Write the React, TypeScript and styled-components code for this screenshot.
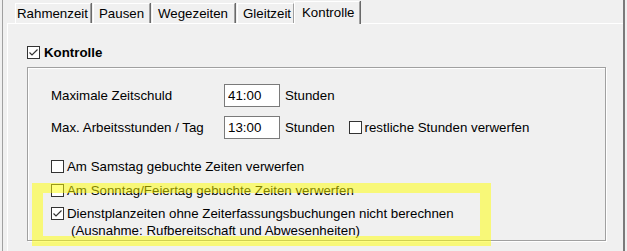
import React from 'react';
import styled, { createGlobalStyle, css } from 'styled-components';

const GlobalStyle = createGlobalStyle`
  html, body {
    margin: 0;
    padding: 0;
    background: #f0f0f0;
  }
  body {
    font-family: "Liberation Sans", Arial, sans-serif;
    font-size: 13.3px;
    color: #000;
  }
`;

const tabs = [
  { label: 'Rahmenzeit', w: 76 },
  { label: 'Pausen', w: 57 },
  { label: 'Wegezeiten', w: 83 },
  { label: 'Gleitzeit', w: 57 },
  { label: 'Kontrolle', w: 66, active: true },
];

export default function App() {
  return (
    <>
      <GlobalStyle />
      <Frame>
        <Window>
          <TabStrip>
            {tabs.map((t) => (
              <Tab key={t.label} $w={t.w} $active={!!t.active}>
                {t.label}
              </Tab>
            ))}
          </TabStrip>
          <Panel>
            <CheckRow $gap={4}>
              <CheckBox checked />
              <Bold>Kontrolle</Bold>
            </CheckRow>
            <Group>
              <FieldRow>
                <Label>Maximale Zeitschuld</Label>
                <TimeInput readOnly defaultValue="41:00" />
                <Unit>Stunden</Unit>
              </FieldRow>
              <FieldRow $top={9}>
                <Label>Max. Arbeitsstunden / Tag</Label>
                <TimeInput readOnly defaultValue="13:00" />
                <Unit>Stunden</Unit>
                <InlineCheck>
                  <CheckBox />
                  <span>restliche Stunden verwerfen</span>
                </InlineCheck>
              </FieldRow>
              <CheckList>
                <CheckRow $gap={3} $h={24}>
                  <CheckBox />
                  <span>Am Samstag gebuchte Zeiten verwerfen</span>
                </CheckRow>
                <CheckRow $gap={3} $h={24}>
                  <CheckBox />
                  <span>Am Sonntag/Feiertag gebuchte Zeiten verwerfen</span>
                </CheckRow>
                <MultiRow>
                  <BoxSlot>
                    <CheckBox checked />
                  </BoxSlot>
                  <div>
                    <div>Dienstplanzeiten ohne Zeiterfassungsbuchungen nicht berechnen</div>
                    <Indent>(Ausnahme: Rufbereitschaft und Abwesenheiten)</Indent>
                  </div>
                </MultiRow>
              </CheckList>
            </Group>
          </Panel>
        </Window>
        <Highlight />
      </Frame>
    </>
  );
}

function CheckBox({ checked }: { checked?: boolean }) {
  return (
    <Box>
      {checked && (
        <svg width="11" height="11" viewBox="0 0 11 11">
          <polyline
            points="1.5,5.5 4,8 9.5,2.5"
            fill="none"
            stroke="#333"
            strokeWidth="1.2"
          />
        </svg>
      )}
    </Box>
  );
}

const Frame = styled.div`
  position: relative;
  width: 627px;
  height: 251px;
  overflow: hidden;
  padding-left: 2px;
  box-sizing: border-box;
`;

const Window = styled.div`
  display: flex;
  flex-direction: column;
  width: 623px;
  height: 100%;
  box-sizing: border-box;
  border-left: 1px solid #a0a0a0;
  border-right: 2px solid #7a7a7a;
`;

const TabStrip = styled.div`
  display: flex;
  align-items: flex-end;
  height: 23px;
  padding-left: 12px;
  position: relative;
  z-index: 1;
`;

const Tab = styled.div<{ $w: number; $active: boolean }>`
  box-sizing: border-box;
  width: ${(p) => p.$w}px;
  height: 20px;
  line-height: 19px;
  padding-left: 5px;
  margin-right: 2px;
  white-space: nowrap;
  background: #f0f0f0;
  border-top: 1px solid #fff;
  border-left: 1px solid #fff;
  border-right: 1px solid #a0a0a0;
  box-shadow: 1px 0 0 #696969;

  &:first-child {
    padding-left: 1px;
  }

  ${(p) =>
    p.$active &&
    css`
      height: 23px;
      line-height: 21px;
      margin-left: -2px;
      margin-bottom: -1px;
      padding-left: 7px;
      position: relative;
      z-index: 2;
    `}
`;

const Panel = styled.div`
  flex: 1;
  margin-left: 4px;
  border-left: 1px solid #fff;
  border-top: 1px solid #fff;
  padding: 22px 0 0 19px;
`;

const CheckRow = styled.div<{ $gap: number; $h?: number }>`
  display: flex;
  align-items: center;
  gap: ${(p) => p.$gap}px;
  height: ${(p) => p.$h ?? 13}px;
  white-space: nowrap;
`;

const Box = styled.span`
  flex: none;
  display: inline-flex;
  align-items: center;
  justify-content: center;
  width: 13px;
  height: 13px;
  box-sizing: border-box;
  border: 1px solid #333;
  background: #fff;
`;

const Bold = styled.span`
  font-weight: 700;
`;

const Group = styled.div`
  width: 579px;
  height: 174px;
  margin-top: 8px;
  box-sizing: border-box;
  border: 1px solid #a0a0a0;
  box-shadow: 1px 1px 0 #fff, inset 1px 1px 0 #fff;
  padding: 16px 0 0 23px;
`;

const FieldRow = styled.div<{ $top?: number }>`
  display: flex;
  align-items: center;
  height: 23px;
  margin-top: ${(p) => p.$top ?? 0}px;
  white-space: nowrap;
`;

const Label = styled.span`
  width: 173px;
  flex: none;
`;

const TimeInput = styled.input`
  width: 56px;
  height: 23px;
  box-sizing: border-box;
  border: 1px solid #7a7a7a;
  background: #fff;
  padding: 0 0 0 3px;
  margin: 0;
  font: inherit;
  color: #000;
  outline: none;
`;

const Unit = styled.span`
  margin-left: 5px;
`;

const InlineCheck = styled.span`
  display: flex;
  align-items: center;
  gap: 3px;
  margin-left: 14px;
`;

const CheckList = styled.div`
  margin-top: 15px;
`;

const MultiRow = styled.div`
  display: flex;
  gap: 3px;
  padding-top: 3px;
  line-height: 17px;
  white-space: nowrap;
`;

const BoxSlot = styled.span`
  display: flex;
  align-items: center;
  height: 17px;
`;

const Indent = styled.div`
  padding-left: 4px;
`;

const Highlight = styled.div`
  position: absolute;
  left: 32px;
  top: 183px;
  width: 459px;
  height: 63px;
  box-sizing: border-box;
  border-style: solid;
  border-width: 10px 11px;
  border-color: rgba(255, 255, 0, 0.5);
  pointer-events: none;
`;
